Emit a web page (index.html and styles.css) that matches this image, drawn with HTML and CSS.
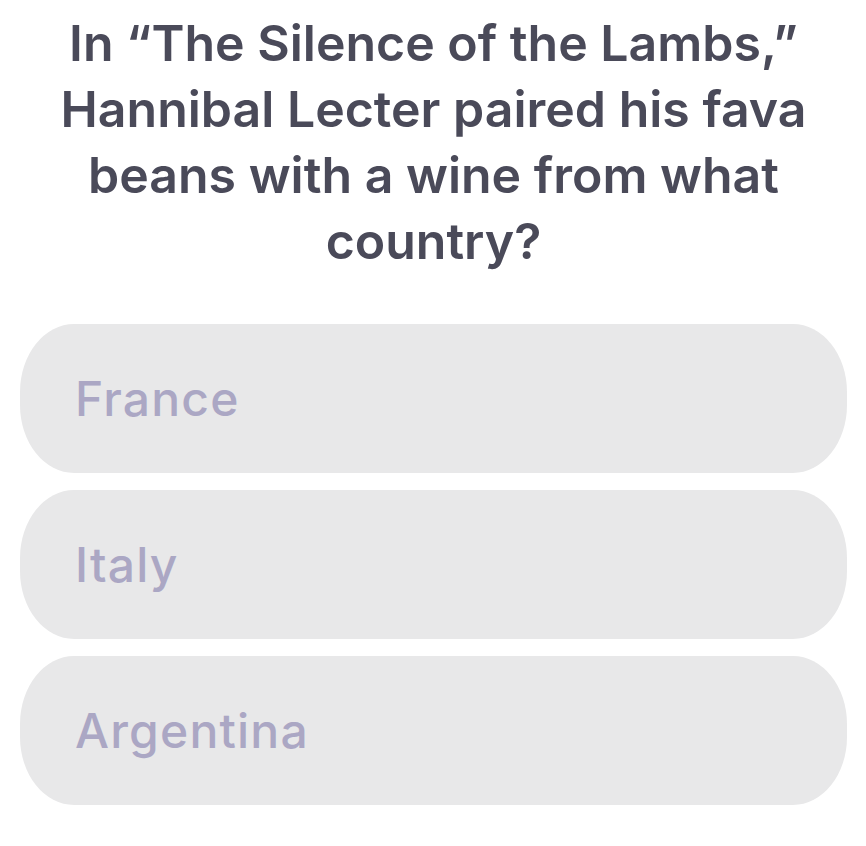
FILE: index.html
```html
<!DOCTYPE html>
<html>
<head>
<meta charset="utf-8">
<link rel="stylesheet" href="styles.css">
</head>
<body>
<main class="quiz">
  <h1 class="question">In “The Silence of the Lambs,”<br>Hannibal Lecter paired his fava<br>beans with a wine from what<br>country?</h1>
  <div class="options">
    <div class="option">France</div>
    <div class="option">Italy</div>
    <div class="option">Argentina</div>
  </div>
</main>
</body>
</html>
```

FILE: styles.css
```css
html, body {
  margin: 0;
  padding: 0;
  background: #ffffff;
}
.quiz {
  width: 866px;
  height: 846px;
  box-sizing: border-box;
  padding: 10px 19px 0 20px;
  font-family: Inter, "Noto Sans", sans-serif;
}
.question {
  margin: 0;
  text-align: center;
  font-size: 50px;
  font-weight: 600;
  line-height: 66px;
  letter-spacing: 0;
  color: #4a4a59;
}
.options {
  margin-top: 50px;
  display: flex;
  flex-direction: column;
  gap: 17px;
}
.option {
  height: 149px;
  border-radius: 54px / 68px;
  background: #e8e8e9;
  display: flex;
  align-items: center;
  padding-left: 55px;
  font-size: 48px;
  font-weight: 500;
  letter-spacing: 1.2px;
  color: #aba7c4;
}
```
